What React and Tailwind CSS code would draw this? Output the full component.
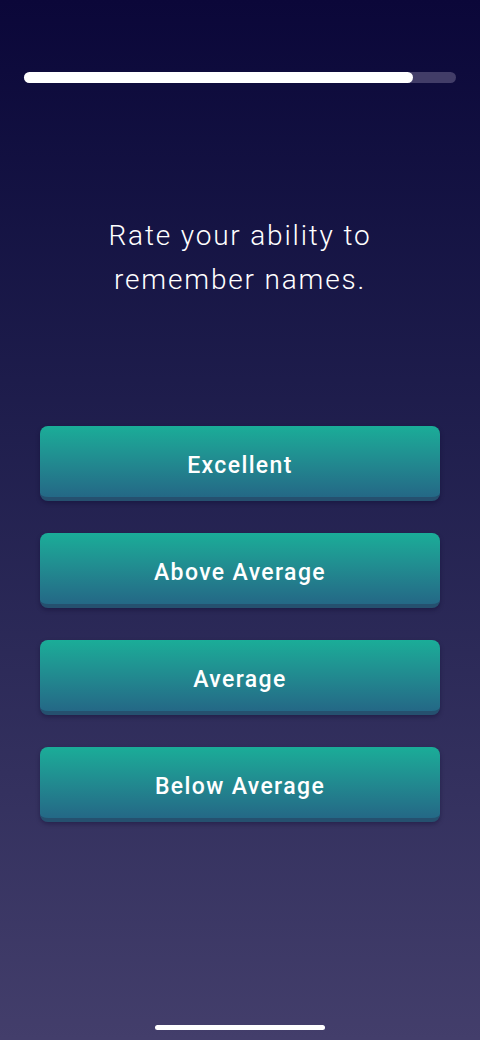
const options = ["Excellent", "Above Average", "Average", "Below Average"];

const progress = 90;

export default function App() {
  return (
    <div
      className="relative flex h-[1040px] w-[480px] flex-col overflow-hidden bg-gradient-to-b from-[#0b0739] to-[#433e6b] text-white"
      style={{ fontFamily: "Roboto, 'Open Sans', sans-serif" }}
    >
      {/* progress */}
      <div className="px-6 pt-[72px]">
        <div className="h-[11px] w-full rounded-full bg-[#423d68]">
          <div
            className="h-full rounded-full bg-white"
            style={{ width: `${progress}%` }}
          />
        </div>
      </div>

      {/* question */}
      <p className="mt-[131px] text-center text-[28px] font-light leading-[44px] tracking-[0.065em]">
        Rate your ability to
        <br />
        remember names.
      </p>

      {/* answers */}
      <div className="mt-[124px] flex flex-col gap-[32px] px-10">
        {options.map((opt) => (
          <button
            key={opt}
            type="button"
            className="flex h-[75px] w-full items-center justify-center rounded-[8px] border-b-[4px] border-[#25506f] bg-gradient-to-b from-[#1aad98] to-[#246886] pt-[9px] text-[23px] font-medium tracking-[0.06em] text-white shadow-[0_2px_4px_rgba(10,5,40,0.35)]"
          >
            {opt}
          </button>
        ))}
      </div>

      {/* home indicator */}
      <div className="absolute bottom-[10px] left-1/2 h-[5px] w-[170px] -translate-x-1/2 rounded-full bg-white" />
    </div>
  );
}
